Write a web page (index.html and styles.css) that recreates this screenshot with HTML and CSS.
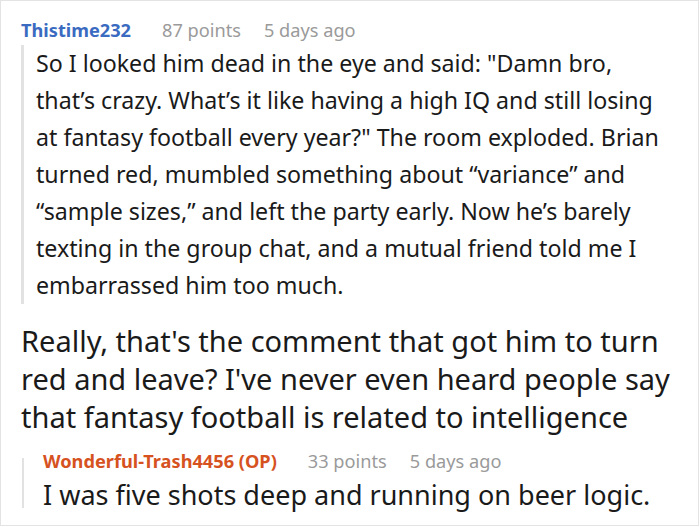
FILE: index.html
```html
<!DOCTYPE html>
<html>
<head>
<meta charset="utf-8">
<link rel="stylesheet" href="styles.css">
</head>
<body>
<div class="card">
  <div class="meta">
    <span class="author">Thistime232</span>
    <span class="info">87 points</span>
    <span class="info">5 days ago</span>
  </div>
  <blockquote class="quote">So I looked him dead in the eye and said: "Damn bro, that’s crazy. What’s it like having a high IQ and still losing at fantasy football every year?" The room exploded. Brian turned red, mumbled something about “variance” and “sample sizes,” and left the party early. Now he’s barely texting in the group chat, and a mutual friend told me I embarrassed him too much.</blockquote>
  <p class="body">Really, that's the comment that got him to turn red and leave? I've never even heard people say that fantasy football is related to intelligence</p>
  <div class="reply">
    <div class="reply-line"></div>
    <div class="reply-content">
      <div class="meta">
        <span class="author op">Wonderful-Trash4456 (OP)</span>
        <span class="info">33 points</span>
        <span class="info">5 days ago</span>
      </div>
      <p class="body reply-body">I was five shots deep and running on beer logic.</p>
    </div>
  </div>
</div>
</body>
</html>
```
FILE: styles.css
```css
html, body {
  margin: 0;
  padding: 0;
  background: #fff;
}
.card {
  box-sizing: border-box;
  width: 699px;
  height: 526px;
  border: 1px solid #e3e3e3;
  padding: 16px 0 0 20px;
  font-family: "Noto Sans", sans-serif;
  color: #1a1a1a;
  overflow: hidden;
}
.meta {
  display: flex;
  gap: 23px;
  font-size: 18.2px;
  line-height: 26px;
  white-space: nowrap;
}
.author {
  font-weight: 700;
  color: #3a6bc1;
  margin-right: 8px;
}
.author.op {
  color: #d6521f;
}
.info {
  color: #9a9a9a;
}
.quote {
  margin: 2px 33px 0 0;
  border-left: 3px solid #e2e2e2;
  padding: 0 0 0 12px;
  font-size: 23.2px;
  line-height: 37px;
}
.body {
  margin: 0;
  font-size: 29px;
  line-height: 38px;
}
.card > .body {
  margin-top: 18px;
}
.reply {
  display: flex;
  margin: 10px 0 0 1px;
}
.reply-line {
  flex: none;
  width: 2px;
  margin: 12px 0 6px;
  background: #e2e2e2;
}
.reply-content {
  padding-left: 19px;
}
.reply .meta {
  line-height: 30px;
}
.reply-body {
  margin-top: 0;
  font-size: 27px;
}
```
